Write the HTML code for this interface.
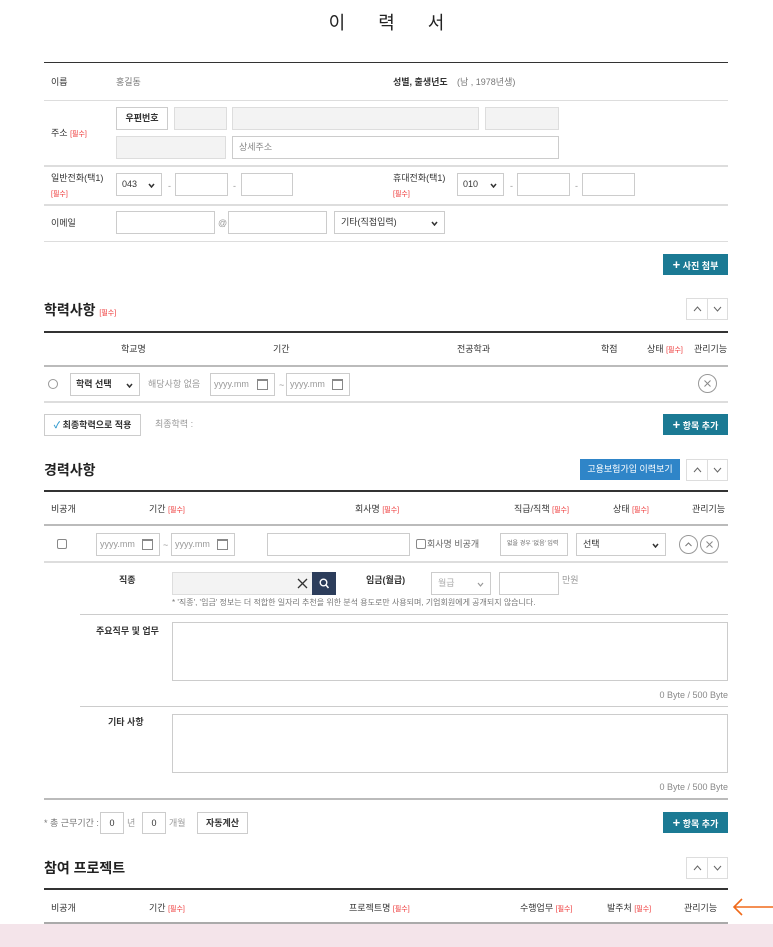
<!DOCTYPE html>
<html><head><meta charset="utf-8">
<style>
*{box-sizing:border-box;margin:0;padding:0}
body{width:773px;height:947px;position:relative;background:#fff;font-family:"Liberation Sans","Noto Sans CJK KR",sans-serif;color:#333;font-size:9px;overflow:hidden}
.a{position:absolute}
.t{position:absolute;white-space:nowrap;line-height:12px}
.ln{position:absolute;left:44px;width:684px}
.in{position:absolute;border:1px solid #ccc;background:#fff;height:23px}
.g{background:#f3f3f3;border-color:#ddd}
.req{color:#e33;font-size:7px}
.btn{position:absolute;background:#1b7a94;color:#fff;font-size:9px;font-weight:bold;height:21px;line-height:21px;text-align:center}
.ar{position:absolute;left:686px;width:42px;height:22px;border:1px solid #ddd}
.ar:after{content:"";position:absolute;left:20px;top:0;bottom:0;border-left:1px solid #ddd}
.ar svg{position:absolute;top:7px}
.h{position:absolute;font-size:14px;font-weight:bold;color:#222;line-height:16px;white-space:nowrap}
.sel svg.dd{position:absolute;right:6px;top:9px}
.ph{color:#999}
.cal{position:absolute;right:6px;top:5px;width:11px;height:11px;border:1px solid #888;border-top-width:2px}
.circ{position:absolute;width:19px;height:19px;border:1px solid #999;border-radius:50%}
.circ svg{position:absolute;left:4px;top:4px}
</style></head><body>
<div class="t" style="left:0;width:773px;text-align:center;top:13px;font-size:18px;line-height:20px;letter-spacing:33px;text-indent:33px;color:#222">이력서</div>

<div class="ln" style="top:62px;height:1px;background:#333"></div>
<div class="t" style="left:51px;top:76px">이름</div>
<div class="t" style="left:116px;top:76px;color:#777">홍길동</div>
<div class="t" style="left:393px;top:76px;font-weight:bold">성별, 출생년도</div>
<div class="t" style="left:457px;top:76px;color:#777">(남 , 1978년생)</div>
<div class="ln" style="top:100px;height:1px;background:#ddd"></div>

<div class="t" style="left:51px;top:127px">주소 <span class="req">[필수]</span></div>
<div class="in" style="left:116px;top:107px;width:52px;text-align:center;line-height:21px;font-weight:bold">우편번호</div>
<div class="in g" style="left:174px;top:107px;width:53px"></div>
<div class="in g" style="left:232px;top:107px;width:247px"></div>
<div class="in g" style="left:485px;top:107px;width:74px"></div>
<div class="in g" style="left:116px;top:136px;width:110px"></div>
<div class="in" style="left:232px;top:136px;width:327px;line-height:21px;padding-left:6px;color:#888">상세주소</div>
<div class="ln" style="top:165px;height:2px;background:#ddd"></div>

<div class="t" style="left:51px;top:172px">일반전화(택1)</div>
<div class="t" style="left:51px;top:187px"><span class="req">[필수]</span></div>
<div class="in sel" style="left:116px;top:173px;width:46px;line-height:21px;padding-left:5px">043<svg class="dd" width="7" height="5"><path d="M1 1L3.5 4L6 1" stroke="#333" stroke-width="1.5" fill="none"/></svg></div>
<div class="t" style="left:168px;top:180px;color:#999">-</div>
<div class="in" style="left:175px;top:173px;width:53px"></div>
<div class="t" style="left:233px;top:180px;color:#999">-</div>
<div class="in" style="left:241px;top:173px;width:52px"></div>
<div class="t" style="left:393px;top:172px">휴대전화(택1)</div>
<div class="t" style="left:393px;top:187px"><span class="req">[필수]</span></div>
<div class="in sel" style="left:457px;top:173px;width:47px;line-height:21px;padding-left:5px">010<svg class="dd" width="7" height="5"><path d="M1 1L3.5 4L6 1" stroke="#333" stroke-width="1.5" fill="none"/></svg></div>
<div class="t" style="left:510px;top:180px;color:#999">-</div>
<div class="in" style="left:517px;top:173px;width:53px"></div>
<div class="t" style="left:575px;top:180px;color:#999">-</div>
<div class="in" style="left:582px;top:173px;width:53px"></div>
<div class="ln" style="top:204px;height:2px;background:#ddd"></div>

<div class="t" style="left:51px;top:217px">이메일</div>
<div class="in" style="left:116px;top:211px;width:99px"></div>
<div class="t" style="left:218px;top:217px;color:#999">@</div>
<div class="in" style="left:228px;top:211px;width:99px"></div>
<div class="in sel" style="left:334px;top:211px;width:111px;line-height:21px;padding-left:6px">기타(직접입력)<svg class="dd" width="7" height="5"><path d="M1 1L3.5 4L6 1" stroke="#333" stroke-width="1.5" fill="none"/></svg></div>
<div class="ln" style="top:241px;height:1px;background:#ddd"></div>

<div class="btn" style="left:663px;top:254px;width:65px"><b style="font-size:13px">+</b> 사진 첨부</div>

<div class="h" style="left:44px;top:302px">학력사항 <span class="req" style="font-weight:normal">[필수]</span></div>
<div class="ar" style="top:298px"><svg style="left:6px" width="9" height="6"><path d="M1 5L4.5 1L8 5" stroke="#666" fill="none"/></svg><svg style="left:26px" width="9" height="6"><path d="M1 1L4.5 5L8 1" stroke="#666" fill="none"/></svg></div>
<div class="ln" style="top:331px;height:2px;background:#333"></div>
<div class="t" style="left:121px;top:343px">학교명</div>
<div class="t" style="left:273px;top:343px">기간</div>
<div class="t" style="left:457px;top:343px">전공학과</div>
<div class="t" style="left:601px;top:343px">학점</div>
<div class="t" style="left:647px;top:343px">상태 <span class="req">[필수]</span></div>
<div class="t" style="left:694px;top:343px">관리기능</div>
<div class="ln" style="top:365px;height:2px;background:#bbb"></div>
<div class="a" style="left:48px;top:379px;width:10px;height:10px;border:1px solid #999;border-radius:50%"></div>
<div class="in sel" style="left:70px;top:373px;width:70px;line-height:21px;padding-left:5px;font-weight:bold">학력 선택<svg class="dd" width="7" height="5"><path d="M1 1L3.5 4L6 1" stroke="#333" stroke-width="1.5" fill="none"/></svg></div>
<div class="t" style="left:148px;top:378px;color:#999">해당사항 없음</div>
<div class="in ph" style="left:210px;top:373px;width:65px;line-height:21px;padding-left:3px">yyyy.mm<span class="cal"></span></div>
<div class="t" style="left:279px;top:379px;color:#999">~</div>
<div class="in ph" style="left:286px;top:373px;width:64px;line-height:21px;padding-left:3px">yyyy.mm<span class="cal"></span></div>
<div class="circ" style="left:698px;top:374px"><svg width="9" height="9"><path d="M1.5 1.5L7.5 7.5M7.5 1.5L1.5 7.5" stroke="#888" fill="none"/></svg></div>
<div class="ln" style="top:401px;height:2px;background:#ddd"></div>
<div class="in" style="left:44px;top:414px;width:97px;height:22px;line-height:20px;text-align:center;font-weight:bold"><span style="color:#3a9ed0">✓</span> 최종학력으로 적용</div>
<div class="t" style="left:155px;top:418px;color:#999">최종학력 :</div>
<div class="btn" style="left:663px;top:414px;width:65px"><b style="font-size:13px">+</b> 항목 추가</div>

<div class="h" style="left:44px;top:462px">경력사항</div>
<div class="btn" style="left:580px;top:459px;width:100px;background:#2f85c8;font-weight:normal">고용보험가입 이력보기</div>
<div class="ar" style="top:459px"><svg style="left:6px" width="9" height="6"><path d="M1 5L4.5 1L8 5" stroke="#666" fill="none"/></svg><svg style="left:26px" width="9" height="6"><path d="M1 1L4.5 5L8 1" stroke="#666" fill="none"/></svg></div>
<div class="ln" style="top:490px;height:2px;background:#333"></div>
<div class="t" style="left:51px;top:503px">비공개</div>
<div class="t" style="left:149px;top:503px">기간 <span class="req">[필수]</span></div>
<div class="t" style="left:355px;top:503px">회사명 <span class="req">[필수]</span></div>
<div class="t" style="left:514px;top:503px">직급/직책 <span class="req">[필수]</span></div>
<div class="t" style="left:613px;top:503px">상태 <span class="req">[필수]</span></div>
<div class="t" style="left:692px;top:503px">관리기능</div>
<div class="ln" style="top:524px;height:2px;background:#bbb"></div>
<div class="a" style="left:57px;top:539px;width:10px;height:10px;border:1px solid #888;border-radius:2px"></div>
<div class="in ph" style="left:96px;top:533px;width:64px;line-height:21px;padding-left:3px">yyyy.mm<span class="cal"></span></div>
<div class="t" style="left:163px;top:539px;color:#999">~</div>
<div class="in ph" style="left:171px;top:533px;width:64px;line-height:21px;padding-left:3px">yyyy.mm<span class="cal"></span></div>
<div class="in" style="left:267px;top:533px;width:143px"></div>
<div class="a" style="left:416px;top:539px;width:10px;height:10px;border:1px solid #888;border-radius:2px"></div>
<div class="t" style="left:427px;top:538px;color:#666">회사명 비공개</div>
<div class="in" style="left:500px;top:533px;width:68px;font-size:6px;line-height:21px;padding-left:6px;color:#666">없을 경우 '없음' 입력</div>
<div class="in sel" style="left:576px;top:533px;width:90px;line-height:21px;padding-left:6px">선택<svg class="dd" width="7" height="5"><path d="M1 1L3.5 4L6 1" stroke="#333" stroke-width="1.5" fill="none"/></svg></div>
<div class="circ" style="left:679px;top:535px"><svg width="9" height="9"><path d="M1.5 6L4.5 3L7.5 6" stroke="#777" fill="none"/></svg></div>
<div class="circ" style="left:700px;top:535px"><svg width="9" height="9"><path d="M1.5 1.5L7.5 7.5M7.5 1.5L1.5 7.5" stroke="#888" fill="none"/></svg></div>
<div class="ln" style="top:561px;height:2px;background:#ddd"></div>

<div class="t" style="left:119px;top:574px;font-weight:bold">직종</div>
<div class="in g" style="left:172px;top:572px;width:140px;border-right:0"></div>
<svg class="a" style="left:297px;top:578px" width="11" height="11"><path d="M1 1L10 10M10 1L1 10" stroke="#333" stroke-width="1.3"/></svg>
<div class="a" style="left:312px;top:572px;width:24px;height:23px;background:#2c3d5b"><svg style="position:absolute;left:7px;top:6px" width="11" height="12"><circle cx="4.5" cy="4.5" r="3.3" stroke="#fff" stroke-width="1.4" fill="none"/><path d="M7 7L9.5 10" stroke="#fff" stroke-width="1.5"/></svg></div>
<div class="t" style="left:366px;top:574px;font-weight:bold">임금(월급)</div>
<div class="in sel" style="left:431px;top:572px;width:60px;line-height:21px;padding-left:6px;color:#aaa">월급<svg class="dd" width="7" height="5"><path d="M1 1L3.5 4L6 1" stroke="#999" stroke-width="1.2" fill="none"/></svg></div>
<div class="in" style="left:499px;top:572px;width:60px;height:23px"></div>
<div class="t" style="left:562px;top:574px;color:#999">만원</div>
<div class="t" style="left:172px;top:597px;font-size:8px;color:#777">* '직종', '임금' 정보는 더 적합한 일자리 추천을 위한 분석 용도로만 사용되며, 기업회원에게 공개되지 않습니다.</div>
<div class="a" style="left:80px;top:614px;width:648px;height:1px;background:#ccc"></div>

<div class="t" style="left:96px;top:625px;font-weight:bold">주요직무 및 업무</div>
<div class="in" style="left:172px;top:622px;width:556px;height:59px"></div>
<div class="t" style="right:45px;top:689px;color:#888">0 Byte / 500 Byte</div>
<div class="a" style="left:80px;top:706px;width:648px;height:1px;background:#ccc"></div>
<div class="t" style="left:108px;top:716px;font-weight:bold">기타 사항</div>
<div class="in" style="left:172px;top:714px;width:556px;height:59px"></div>
<div class="t" style="right:45px;top:781px;color:#888">0 Byte / 500 Byte</div>
<div class="ln" style="top:798px;height:2px;background:#bbb"></div>

<div class="t" style="left:44px;top:817px;color:#777">* 총 근무기간 :</div>
<div class="in" style="left:100px;top:812px;width:24px;height:22px;text-align:center;line-height:20px">0</div>
<div class="t" style="left:127px;top:817px;color:#999">년</div>
<div class="in" style="left:142px;top:812px;width:24px;height:22px;text-align:center;line-height:20px">0</div>
<div class="t" style="left:169px;top:817px;color:#999">개월</div>
<div class="in" style="left:197px;top:812px;width:51px;height:22px;text-align:center;line-height:20px;font-weight:bold">자동계산</div>
<div class="btn" style="left:663px;top:812px;width:65px"><b style="font-size:13px">+</b> 항목 추가</div>

<div class="h" style="left:44px;top:860px">참여 프로젝트</div>
<div class="ar" style="top:857px"><svg style="left:6px" width="9" height="6"><path d="M1 5L4.5 1L8 5" stroke="#666" fill="none"/></svg><svg style="left:26px" width="9" height="6"><path d="M1 1L4.5 5L8 1" stroke="#666" fill="none"/></svg></div>
<div class="ln" style="top:888px;height:2px;background:#333"></div>
<div class="t" style="left:51px;top:902px">비공개</div>
<div class="t" style="left:149px;top:902px">기간 <span class="req">[필수]</span></div>
<div class="t" style="left:349px;top:902px">프로젝트명 <span class="req">[필수]</span></div>
<div class="t" style="left:520px;top:902px">수행업무 <span class="req">[필수]</span></div>
<div class="t" style="left:607px;top:902px">발주처 <span class="req">[필수]</span></div>
<div class="t" style="left:684px;top:902px">관리기능</div>
<div class="ln" style="top:922px;height:2px;background:#aaa"></div>
<div class="a" style="left:0;top:924px;width:773px;height:23px;background:#f4e4ea"></div>
<svg class="a" style="left:731px;top:897px" width="42" height="20"><path d="M42 10H3M11 2L3 10L11 18" stroke="#f06a1a" stroke-width="1.6" fill="none"/></svg>
</body></html>
